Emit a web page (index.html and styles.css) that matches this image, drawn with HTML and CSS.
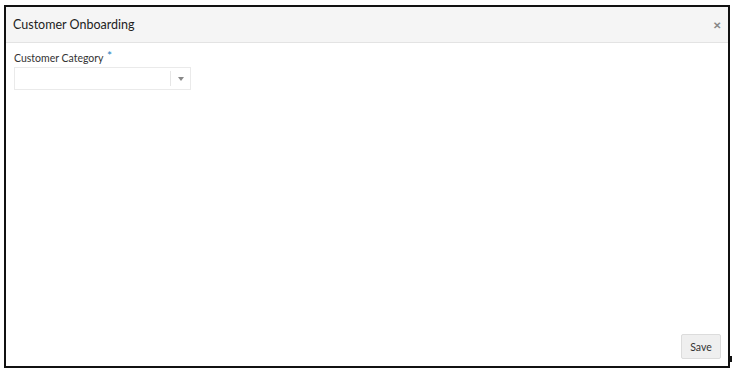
FILE: index.html
```html
<!DOCTYPE html>
<html>
<head>
<meta charset="utf-8">
<link rel="stylesheet" href="styles.css">
</head>
<body>
<div class="frame">
  <div class="dialog">
    <div class="header">
      <span class="title">Customer Onboarding</span>
      <span class="close">&#x2715;</span>
    </div>
    <div class="body">
      <label class="label">Customer Category <span class="req">*</span></label>
      <div class="select">
        <div class="select-value"></div>
        <div class="select-arrow"><span class="tri"></span></div>
      </div>
    </div>
    <div class="footer">
      <button class="btn">Save</button>
    </div>
  </div>
  <span class="mark"></span>
</div>
</body>
</html>
```

FILE: styles.css
```css
html, body {
  margin: 0;
  padding: 0;
  background: #fff;
}
body {
  font-family: "Lato", "Open Sans", sans-serif;
  color: #333;
}
.frame {
  position: relative;
  padding: 5px 0 0 4px;
  width: 732px;
  height: 373px;
  box-sizing: border-box;
}
.dialog {
  width: 726px;
  height: 363px;
  box-sizing: border-box;
  border: 2px solid #111;
  display: flex;
  flex-direction: column;
}
.header {
  height: 35px;
  background: #f5f5f5;
  border-bottom: 1px solid #e3e3e3;
  display: flex;
  align-items: center;
  justify-content: space-between;
  padding: 0 7px 0 7px;
}
.title {
  font-size: 12.5px;
  color: #222;
}
.close {
  font-size: 10px;
  color: #888;
  font-weight: bold;
}
.body {
  flex: 1;
  padding: 6px 0 0 8px;
}
.label {
  display: block;
  font-size: 10.5px;
  color: #333;
  height: 14px;
  line-height: 14px;
}
.req {
  color: #1e7fc0;
  font-size: 12px;
  vertical-align: 2px;
  margin-left: 1px;
}
.select {
  margin-top: 4px;
  width: 177px;
  height: 23px;
  border: 1px solid #eaeaea;
  box-sizing: border-box;
  display: flex;
  background: #fff;
}
.select-value {
  flex: 1;
  border-right: 1px solid #e6e6e6;
  margin: 3px 0;
}
.select-arrow {
  width: 19px;
  display: flex;
  align-items: center;
  justify-content: center;
}
.tri {
  width: 0;
  height: 0;
  border-left: 3.5px solid transparent;
  border-right: 3.5px solid transparent;
  border-top: 4px solid #888;
}
.footer {
  display: flex;
  justify-content: flex-end;
  padding: 0 7px 7px 0;
}
.btn {
  width: 40px;
  height: 25px;
  font-family: "Lato", "Open Sans", sans-serif;
  font-size: 10.5px;
  color: #333;
  background: #efefef;
  border: 1px solid #dcdcdc;
  border-radius: 2px;
  padding: 0;
}
.mark {
  position: absolute;
  left: 729px;
  top: 356px;
  width: 3px;
  height: 6px;
  background: #111;
}
```
